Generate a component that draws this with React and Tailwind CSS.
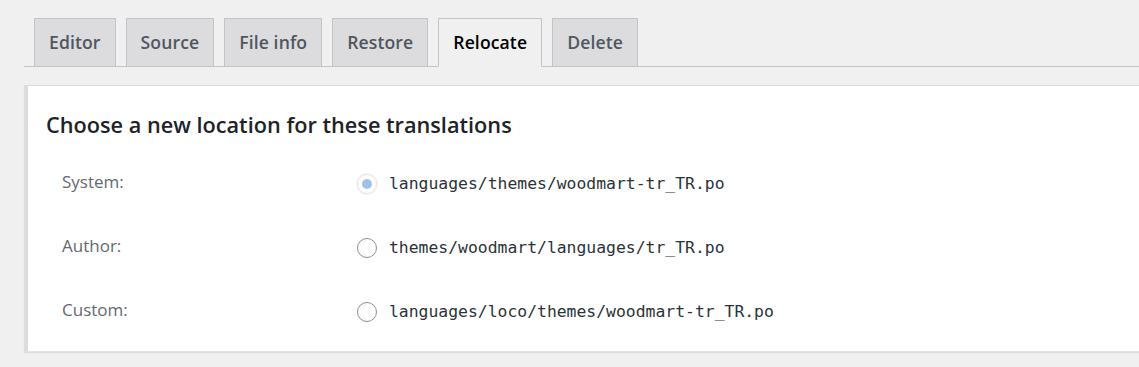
import React, { useState } from 'react';

const tabs = ['Editor', 'Source', 'File info', 'Restore', 'Relocate', 'Delete'];

const options = [
  { key: 'system', label: 'System:', path: 'languages/themes/woodmart-tr_TR.po' },
  { key: 'author', label: 'Author:', path: 'themes/woodmart/languages/tr_TR.po' },
  { key: 'custom', label: 'Custom:', path: 'languages/loco/themes/woodmart-tr_TR.po' },
];

const Radio = ({ checked }) => (
  <span
    className={`w-[20px] h-[20px] rounded-full border flex items-center justify-center shrink-0 ${
      checked ? 'border-[#e4e6ea] shadow-[0_0_0_1px_#f3f3f4]' : 'border-[#8c8f94]'
    }`}
  >
    {checked && <span className="w-[10px] h-[10px] rounded-full bg-[#9ec2e6]" />}
  </span>
);

export default function App() {
  const [selected, setSelected] = useState('system');

  return (
    <div className="min-h-[367px] bg-[#f0f0f1] pl-[24px] pt-[18px] font-['Open_Sans',sans-serif]">
      <nav className="flex gap-[10px] pl-[10px] border-b border-[#c3c4c7] h-[49px]">
        {tabs.map((t) => {
          const active = t === 'Relocate';
          return (
            <div
              key={t}
              className={`px-[14px] h-[49px] flex items-center border border-[#c3c4c7] text-[17.6px] font-semibold tracking-[0.1px] ${
                active ? 'bg-[#f0f0f1] text-black border-b-[#f0f0f1]' : 'bg-[#dcdcde] text-[#50575e]'
              }`}
            >
              {t}
            </div>
          );
        })}
      </nav>

      <section className="mt-[18px] bg-white border-l-4 border-l-[#dcdcde] border-t border-t-[#dcdcde] shadow-[0_1px_1px_rgba(0,0,0,0.08)] border-b border-b-[#e2e2e4] h-[267px] pl-[18px]">
        <h2 className="pt-[23px] text-[21.7px] font-semibold text-[#1d2327] leading-[32px]">
          Choose a new location for these translations
        </h2>
        <div className="mt-[11px] flex flex-col">
          {options.map((o) => (
            <label
              key={o.key}
              onClick={() => setSelected(o.key)}
              className="flex items-center h-[64px] cursor-pointer"
            >
              <span className="w-[311px] pl-[16px] text-[17px] text-[#646970] -mt-[4px]">{o.label}</span>
              <Radio checked={selected === o.key} />
              <span className="ml-[12px] font-['DejaVu_Sans_Mono',monospace] text-[16.4px] text-[#2c3338]">
                {o.path}
              </span>
            </label>
          ))}
        </div>
      </section>
    </div>
  );
}
